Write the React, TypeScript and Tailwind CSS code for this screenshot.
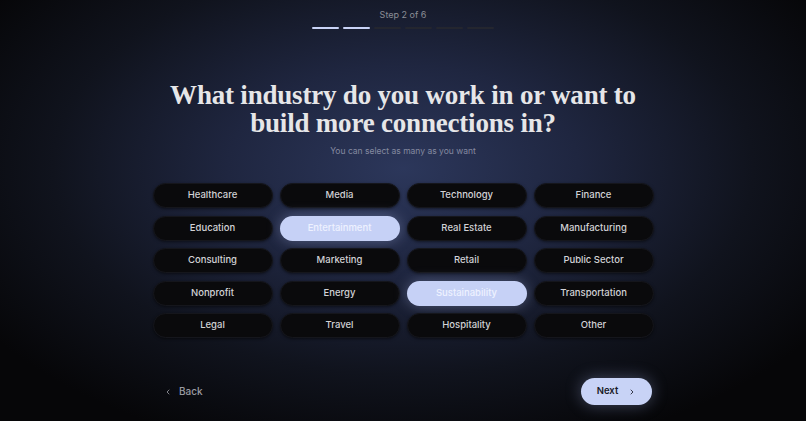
import React, { useState } from 'react';

const industries = [
  'Healthcare', 'Media', 'Technology', 'Finance',
  'Education', 'Entertainment', 'Real Estate', 'Manufacturing',
  'Consulting', 'Marketing', 'Retail', 'Public Sector',
  'Nonprofit', 'Energy', 'Sustainability', 'Transportation',
  'Legal', 'Travel', 'Hospitality', 'Other',
];

function Chevron({ dir, className }: { dir: 'left' | 'right'; className?: string }) {
  return (
    <svg className={className} viewBox="0 0 24 24" fill="none" stroke="currentColor" strokeWidth={2.5} strokeLinecap="round" strokeLinejoin="round">
      {dir === 'left' ? <path d="M15 18l-6-6 6-6" /> : <path d="M9 18l6-6-6-6" />}
    </svg>
  );
}

export default function App() {
  const [selected, setSelected] = useState<string[]>(['Entertainment', 'Sustainability']);

  const toggle = (name: string) => {
    setSelected(prev => prev.includes(name) ? prev.filter(n => n !== name) : [...prev, name]);
  };

  return (
    <div
      className="w-[806px] h-[421px] overflow-hidden flex flex-col items-center bg-[radial-gradient(ellipse_62%_70%_at_50%_40%,#2c375b_0%,#1f2640_35%,#10131d_70%,#060608_100%)] font-['Inter',sans-serif]"
    >
      {/* step indicator */}
      <div className="mt-[9px] text-[9px] leading-[12px] text-[#8b8d96]">Step 2 of 6</div>
      <div className="mt-[6px] flex gap-[4px]">
        {[0, 1, 2, 3, 4, 5].map(i => (
          <div key={i} className={`w-[27px] h-[2px] rounded-full ${i < 2 ? 'bg-[#c9d3f7]' : 'bg-[#24262f]'}`} />
        ))}
      </div>

      <h1 className="mt-[52px] text-center text-[27px] leading-[28px] font-bold text-[#e6e6e8] font-['Liberation_Serif',serif] tracking-[-0.2px]">
        What industry do you work in or want to
        <br />
        build more connections in?
      </h1>
      <p className="mt-[8px] text-[8.5px] leading-[12px] text-[#858aa0]">You can select as many as you want</p>

      <div className="mt-[26px] grid grid-cols-4 gap-x-[7px] gap-y-[7.5px]">
        {industries.map(name => {
          const on = selected.includes(name);
          return (
            <button
              key={name}
              onClick={() => toggle(name)}
              className={`w-[120px] h-[25px] rounded-full text-[9.5px] font-medium flex items-center justify-center ${
                on
                  ? 'bg-[#c6d1f6] text-[#eef1ff] shadow-[0_0_14px_rgba(180,195,245,0.35)]'
                  : 'bg-[#0a0a0c] text-[#d2d2d6] shadow-[0_1px_3px_rgba(0,0,0,0.5)] border border-[#15161c]'
              }`}
            >
              {name}
            </button>
          );
        })}
      </div>

      <div className="mt-[40px] w-[498px] flex items-center justify-between">
        <button className="flex items-center gap-[7px] pl-[10px] text-[10px] font-medium text-[#9a9ba2]">
          <Chevron dir="left" className="w-[8px] h-[8px]" />
          Back
        </button>
        <button className="w-[71px] h-[27px] rounded-full bg-[#c8d3f6] text-[#1a1c28] text-[9.5px] font-semibold flex items-center justify-center gap-[10px] shadow-[0_0_16px_rgba(170,185,240,0.35)]">
          Next
          <Chevron dir="right" className="w-[8px] h-[8px]" />
        </button>
      </div>
    </div>
  );
}
